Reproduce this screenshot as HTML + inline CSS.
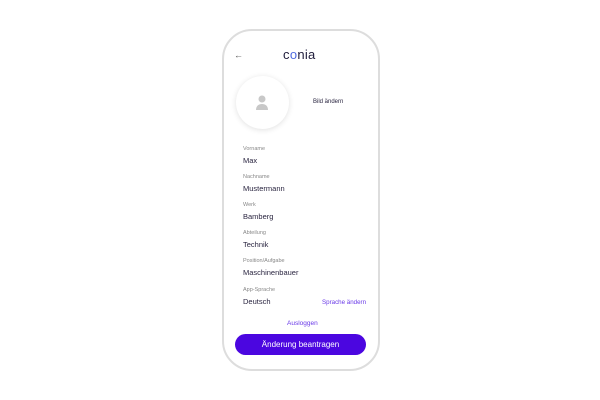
<!DOCTYPE html>
<html><head><style>
body{margin:0;width:600px;height:400px;background:#fff;font-family:"Liberation Sans",sans-serif;position:relative;overflow:hidden}
.ph{position:absolute;left:222px;top:29px;width:154px;height:338px;border:2px solid #ddd;border-radius:30px;background:#fff}
.a{position:absolute;white-space:nowrap}
.l{font-size:5.5px;color:#888;left:243px}
.v{font-size:7.5px;color:#2a2540;left:243px}
</style></head><body>
<div class="ph"></div>
<div class="a" style="left:234px;top:50px;font-size:9px;color:#555">&#8592;</div>
<div class="a" style="left:283px;top:47px;font-size:13px;color:#1e1b3a;letter-spacing:0.3px">c<span style="color:#4f6ae0">o</span>nia</div>
<div class="a" style="left:236px;top:76px;width:53px;height:53px;border-radius:50%;background:#fff;box-shadow:0 1px 6px rgba(0,0,0,.12)"></div>
<svg class="a" style="left:254px;top:94px" width="16" height="18" viewBox="0 0 16 18"><circle cx="8" cy="5" r="3.5" fill="#c8c8c8"/><path d="M2 16c0-4 2.5-6 6-6s6 2 6 6z" fill="#c8c8c8"/></svg>
<div class="a" style="left:313px;top:99px;font-size:6px;color:#2a2540">Bild ändern</div>
<div class="a l" style="top:146px">Vorname</div><div class="a v" style="top:156px">Max</div>
<div class="a l" style="top:174px">Nachname</div><div class="a v" style="top:184px">Mustermann</div>
<div class="a l" style="top:202px">Werk</div><div class="a v" style="top:212px">Bamberg</div>
<div class="a l" style="top:230px">Abteilung</div><div class="a v" style="top:240px">Technik</div>
<div class="a l" style="top:258px">Position/Aufgabe</div><div class="a v" style="top:268px">Maschinenbauer</div>
<div class="a l" style="top:287px">App-Sprache</div><div class="a v" style="top:297px">Deutsch</div>
<div class="a" style="left:322px;top:299px;font-size:6.2px;color:#6a3ae8">Sprache ändern</div>
<div class="a" style="left:287px;top:320px;font-size:6.5px;color:#6a3ae8">Ausloggen</div>
<div class="a" style="left:235px;top:334px;width:131px;height:21px;border-radius:11px;background:#4b06e0;color:#fff;font-size:8px;text-align:center;line-height:21px">Änderung beantragen</div>
</body></html>
